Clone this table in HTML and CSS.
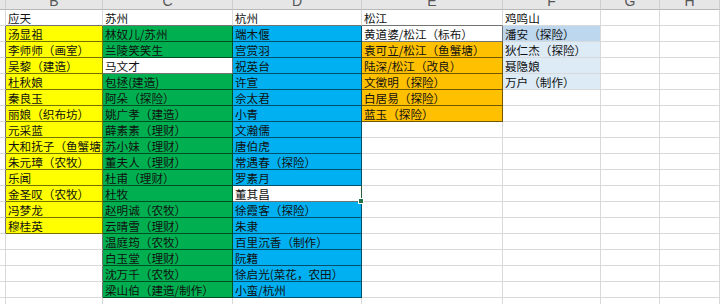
FILE: index.html
```html
<!DOCTYPE html>
<html lang="zh-CN">
<head>
<meta charset="utf-8">
<title>Sheet</title>
<link rel="stylesheet" href="styles.css">
</head>
<body>
<div class="sheet">
  <div class="h"></div><div class="h"><span>B</span></div><div class="h"><span>C</span></div><div class="h"><span>D</span></div><div class="h"><span>E</span></div><div class="h"><span>F</span></div><div class="h"><span>G</span></div><div class="h"><span>H</span></div>

  <div class="c"></div><div class="c bk">应天</div><div class="c bk">苏州</div><div class="c bk">杭州</div><div class="c bk">松江</div><div class="c">鸡鸣山</div><div class="c"></div><div class="c"></div>

  <div class="c rk"></div><div class="c k y">汤显祖</div><div class="c k g">林奴儿/苏州</div><div class="c k b">端木偃</div><div class="c k">黄道婆/松江（标布）</div><div class="c s">潘安（探险）</div><div class="c"></div><div class="c"></div>

  <div class="c rk"></div><div class="c k y">李师师（画室）</div><div class="c k g">兰陵笑笑生</div><div class="c k b">宫赏羽</div><div class="c k o">袁可立/松江（鱼蟹塘）</div><div class="c l">狄仁杰（探险）</div><div class="c"></div><div class="c"></div>

  <div class="c rk"></div><div class="c k y">吴黎（建造）</div><div class="c k">马文才</div><div class="c k b">祝英台</div><div class="c k o">陆深/松江（改良）</div><div class="c l">聂隐娘</div><div class="c"></div><div class="c"></div>

  <div class="c rk"></div><div class="c k y">杜秋娘</div><div class="c k g">包拯(建造)</div><div class="c k b">许宣</div><div class="c k o">文徵明（探险）</div><div class="c l">万户（制作）</div><div class="c"></div><div class="c"></div>

  <div class="c rk"></div><div class="c k y">秦良玉</div><div class="c k g">阿朵（探险）</div><div class="c k b">佘太君</div><div class="c k o">白居易（探险）</div><div class="c"></div><div class="c"></div><div class="c"></div>

  <div class="c rk"></div><div class="c k y">丽娘（织布坊）</div><div class="c k g">姚广孝（建造）</div><div class="c k b">小青</div><div class="c k o">蓝玉（探险）</div><div class="c"></div><div class="c"></div><div class="c"></div>

  <div class="c rk"></div><div class="c k y">元采蓝</div><div class="c k g">薛素素（理财）</div><div class="c k b">文瀚儒</div><div class="c"></div><div class="c"></div><div class="c"></div><div class="c"></div>

  <div class="c rk"></div><div class="c k y">大和抚子（鱼蟹塘）</div><div class="c k g">苏小妹（理财）</div><div class="c k b">唐伯虎</div><div class="c"></div><div class="c"></div><div class="c"></div><div class="c"></div>

  <div class="c rk"></div><div class="c k y">朱元璋（农牧）</div><div class="c k g">董夫人（理财）</div><div class="c k b">常遇春（探险）</div><div class="c"></div><div class="c"></div><div class="c"></div><div class="c"></div>

  <div class="c rk"></div><div class="c k y">乐闻</div><div class="c k g">杜甫（理财）</div><div class="c k b">罗素月</div><div class="c"></div><div class="c"></div><div class="c"></div><div class="c"></div>

  <div class="c rk"></div><div class="c k y">金圣叹（农牧）</div><div class="c k g">杜牧</div><div class="c k sel">董其昌<i class="handle"></i></div><div class="c"></div><div class="c"></div><div class="c"></div><div class="c"></div>

  <div class="c rk"></div><div class="c k y">冯梦龙</div><div class="c k g">赵明诚（农牧）</div><div class="c k b">徐霞客（探险）</div><div class="c"></div><div class="c"></div><div class="c"></div><div class="c"></div>

  <div class="c rk"></div><div class="c k y">穆桂英</div><div class="c k g">云晴雪（理财）</div><div class="c k b">朱隶</div><div class="c"></div><div class="c"></div><div class="c"></div><div class="c"></div>

  <div class="c"></div><div class="c rk"></div><div class="c k g">温庭筠（农牧）</div><div class="c k b">百里沉香（制作）</div><div class="c"></div><div class="c"></div><div class="c"></div><div class="c"></div>

  <div class="c"></div><div class="c rk"></div><div class="c k g">白玉堂（理财）</div><div class="c k b">阮籍</div><div class="c"></div><div class="c"></div><div class="c"></div><div class="c"></div>

  <div class="c"></div><div class="c rk"></div><div class="c k g">沈万千（农牧）</div><div class="c k b">徐启光(菜花，农田）</div><div class="c"></div><div class="c"></div><div class="c"></div><div class="c"></div>

  <div class="c"></div><div class="c rk"></div><div class="c k g">梁山伯（建造/制作）</div><div class="c k b">小蛮/杭州</div><div class="c"></div><div class="c"></div><div class="c"></div><div class="c"></div>

  <div class="c"></div><div class="c"></div><div class="c"></div><div class="c"></div><div class="c"></div><div class="c"></div><div class="c"></div><div class="c"></div>
</div>
</body>
</html>
```
FILE: styles.css
```css
html, body {
  margin: 0;
  padding: 0;
  background: #ffffff;
  overflow: hidden;
}

.sheet {
  display: grid;
  grid-template-columns: 6px 97px 130px 129px 141px 98px 59px 1fr;
  grid-template-rows: 10px;
  grid-auto-rows: 16px;
  width: 720px;
  font-family: "Noto Sans CJK SC", "Noto Sans", sans-serif;
  font-size: 11.6px;
  color: #111111;
}

.h {
  box-sizing: border-box;
  background: #e6e6e6;
  border-right: 1px solid #cfcfcf;
  border-bottom: 1px solid #b8b8b8;
  overflow: hidden;
  text-align: center;
  font-family: "Liberation Sans", "Noto Sans", sans-serif;
  font-size: 14px;
  color: #555555;
}

.h span {
  display: block;
  line-height: 20px;
  margin-top: -9px;
}

.c {
  position: relative;
  box-sizing: border-box;
  border-right: 1px solid #d9d9d9;
  border-bottom: 1px solid #d9d9d9;
  padding: 0 0 0 2px;
  line-height: 16px;
  white-space: nowrap;
  overflow: hidden;
}

.k {
  border-right-color: rgba(0, 0, 0, 0.55);
  border-bottom-color: rgba(0, 0, 0, 0.55);
}

.rk {
  border-right-color: rgba(0, 0, 0, 0.55);
}

.bk {
  border-bottom-color: rgba(0, 0, 0, 0.55);
}

.y { background: #ffff00; }
.g { background: #00b050; }
.b { background: #00b0f0; }
.o { background: #ffc000; }
.l { background: #ddebf7; }
.s { background: #bdd7ee; }

.sel {
  overflow: visible;
  border-right-color: #2f5f3a;
  background: #ffffff;
}

.handle {
  position: absolute;
  right: -3px;
  bottom: -3px;
  width: 4px;
  height: 4px;
  background: #217346;
  border: 1px solid #ffffff;
  z-index: 2;
}
```
